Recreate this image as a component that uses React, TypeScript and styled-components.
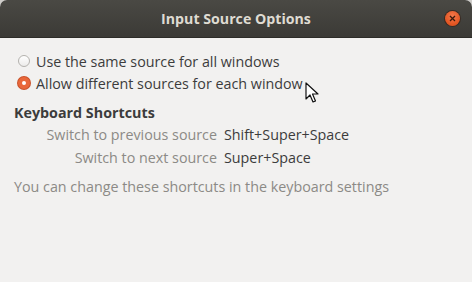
import React, { useState } from 'react';
import styled, { createGlobalStyle } from 'styled-components';

const Global = createGlobalStyle`
  html, body {
    margin: 0;
    padding: 0;
    background: #cfcdca;
  }
  body {
    font-family: "Open Sans", "DejaVu Sans", sans-serif;
  }
`

const Window = styled.div`
  width: 472px;
  height: 282px;
  display: flex;
  flex-direction: column;
  background: #f2f1f0;
  border-radius: 7px 7px 0 0;
  overflow: hidden;
  position: relative;
`
const TitleBar = styled.div`
  height: 37px;
  flex: none;
  display: flex;
  align-items: center;
  justify-content: center;
  position: relative;
  background: linear-gradient(#4a4944, #3b3a36);
  border-bottom: 1px solid #2d2c28;
`
const Title = styled.h1`
  margin: 0;
  font-size: 14.2px;
  font-weight: 700;
  color: #dfdbd2;
`
const Close = styled.button`
  position: absolute;
  right: 12px;
  top: 11px;
  width: 15px;
  height: 15px;
  padding: 0;
  border: none;
  border-radius: 50%;
  background: radial-gradient(circle at 50% 35%, #f47a4e, #e2531f 70%);
  box-shadow: 0 0 0 1px #3a2a22;
  display: flex;
  align-items: center;
  justify-content: center;
`
const Body = styled.div`
  padding: 12px 14px 0 14px;
  display: flex;
  flex-direction: column;
`
const RadioRow = styled.label`
  display: flex;
  align-items: center;
  gap: 6px;
  height: 22px;
  padding-left: 4px;
  font-size: 14.3px;
  color: #3c3c3c;
`
const RadioDot = styled.span<{ checked: boolean }>`
  width: 12px;
  height: 12px;
  border-radius: 50%;
  box-sizing: border-box;
  flex: none;
  border: ${p => (p.checked ? '4px solid #e9673a' : '1px solid #b4b2ae')};
  background: ${p => (p.checked ? '#ffffff' : 'linear-gradient(#ffffff, #ecebea)')};
  box-shadow: ${p => (p.checked ? '0 0 0 1px #c9522a' : 'none')};
`
const Heading = styled.h2`
  margin: 9px 0 3px 0;
  font-size: 14.3px;
  font-weight: 700;
  color: #3c3c3c;
`
const Shortcuts = styled.div`
  display: grid;
  grid-template-columns: 203px auto;
  column-gap: 7px;
  row-gap: 4px;
  font-size: 14.3px;
`
const Label = styled.span`
  text-align: right;
  color: #8c8a86;
`
const Value = styled.span`
  color: #3c3c3c;
`
const Note = styled.p`
  margin: 10px 0 0 0;
  font-size: 14.3px;
  color: #8c8a86;
`
const Pointer = styled.svg`
  position: absolute;
  left: 305px;
  top: 82px;
`

const options = [
  'Use the same source for all windows',
  'Allow different sources for each window',
]

const shortcuts = [
  ['Switch to previous source', 'Shift+Super+Space'],
  ['Switch to next source', 'Super+Space'],
]

const App = () => {
  const [selected, setSelected] = useState(1)

  return (
    <>
      <Global />
      <Window>
        <TitleBar>
          <Title>Input Source Options</Title>
          <Close aria-label="Close">
            <svg width="7" height="7" viewBox="0 0 7 7">
              <path d="M1 1L6 6M6 1L1 6" stroke="#3a1a0c" strokeWidth="1.3" />
            </svg>
          </Close>
        </TitleBar>
        <Body>
          {options.map((text, i) => (
            <RadioRow key={text} onClick={() => setSelected(i)}>
              <RadioDot checked={selected === i} />
              {text}
            </RadioRow>
          ))}
          <Heading>Keyboard Shortcuts</Heading>
          <Shortcuts>
            {shortcuts.map(([label, keys]) => (
              <React.Fragment key={label}>
                <Label>{label}</Label>
                <Value>{keys}</Value>
              </React.Fragment>
            ))}
          </Shortcuts>
          <Note>You can change these shortcuts in the keyboard settings</Note>
        </Body>
        <Pointer width="14" height="22" viewBox="0 0 14 22">
          <path d="M1 1V17L5 13L8 20L10.5 19L7.5 12H13Z" fill="#ffffff" stroke="#111111" strokeWidth="1.2" strokeLinejoin="round" />
        </Pointer>
      </Window>
    </>
  )
}

export default App
